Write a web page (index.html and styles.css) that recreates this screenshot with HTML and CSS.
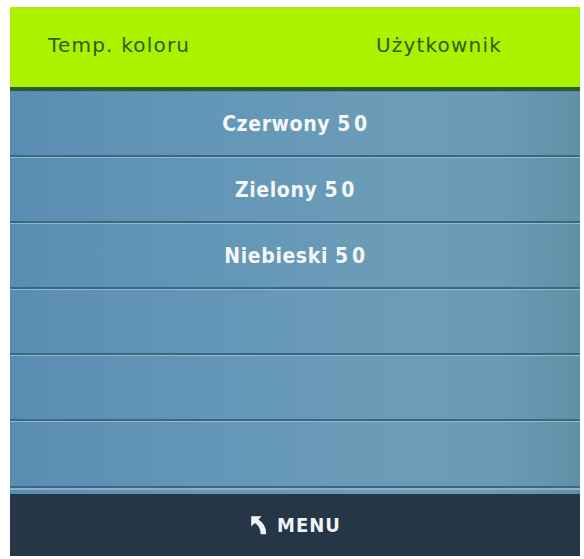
FILE: index.html
```html
<!DOCTYPE html>
<html lang="pl">
<head>
<meta charset="utf-8">
<title>Temp. koloru</title>
<link rel="stylesheet" href="styles.css">
</head>
<body>
<div class="screen">
  <div class="header">
    <span class="title">Temp. koloru</span>
    <span class="value">Użytkownik</span>
  </div>
  <div class="list">
    <div class="row first">Czerwony 5<span class="gap">0</span></div>
    <div class="row">Zielony 5<span class="gap">0</span></div>
    <div class="row">Niebieski 5<span class="gap">0</span></div>
    <div class="row"></div>
    <div class="row"></div>
    <div class="row last"></div>
  </div>
  <div class="footer">
    <svg class="back" viewBox="0 0 20 20" width="22" height="22">
      <path d="M2 2 L11.5 2 L8.6 4.9 Q16 9.5 15.5 18.5 L10.5 18.5 Q11 11.8 5.3 8.1 L2 11.4 Z" fill="#eef3f6"/>
    </svg>
    <span class="menu">MENU</span>
  </div>
</div>
</body>
</html>
```
FILE: styles.css
```css
html, body {
  margin: 0;
  padding: 0;
  background: #ffffff;
}
body {
  padding: 7px 4px 0 10px;
}
.screen {
  width: 570px;
  display: flex;
  flex-direction: column;
}
.header {
  height: 80px;
  background: #aaf200;
  border-bottom: 4px solid #2c5a2c;
  display: flex;
  align-items: center;
  justify-content: space-between;
  padding: 0 78px 0 38px;
  font-family: "DejaVu Sans", sans-serif;
  font-size: 20px;
  letter-spacing: 1.2px;
  color: #286010;
}
.header .title, .header .value {
  position: relative;
  top: -2px;
}
.list {
  display: flex;
  flex-direction: column;
  padding-bottom: 6px;
  background: linear-gradient(90deg, #5a8db2 0%, #6295b7 30%, #6a9cb8 60%, #6a9db4 85%, #5f91a7 100%);
}
.row {
  height: 63px;
  border-top: 1px solid #8fb9cd;
  border-bottom: 2px solid #3b6782;
  display: flex;
  align-items: center;
  justify-content: center;
  font-family: "DejaVu Sans Condensed", "DejaVu Sans", sans-serif;
  font-weight: bold;
  font-size: 21px;
  letter-spacing: 0.6px;
  color: #f4f7f8;
}
.row .gap {
  margin-left: 3px;
}
.row.first {
  border-top: 1px solid #5b8bab;
}
.row.last {
  height: 64px;
  box-shadow: 0 2px 0 #8ab3c6;
}
.footer {
  height: 62px;
  background: #253646;
  display: flex;
  align-items: center;
  justify-content: center;
  gap: 6px;
}
.footer .back {
  display: block;
}
.footer .menu {
  font-family: "DejaVu Sans Condensed", "DejaVu Sans", sans-serif;
  font-weight: bold;
  font-size: 20px;
  letter-spacing: 1px;
  color: #eef3f6;
}
```
